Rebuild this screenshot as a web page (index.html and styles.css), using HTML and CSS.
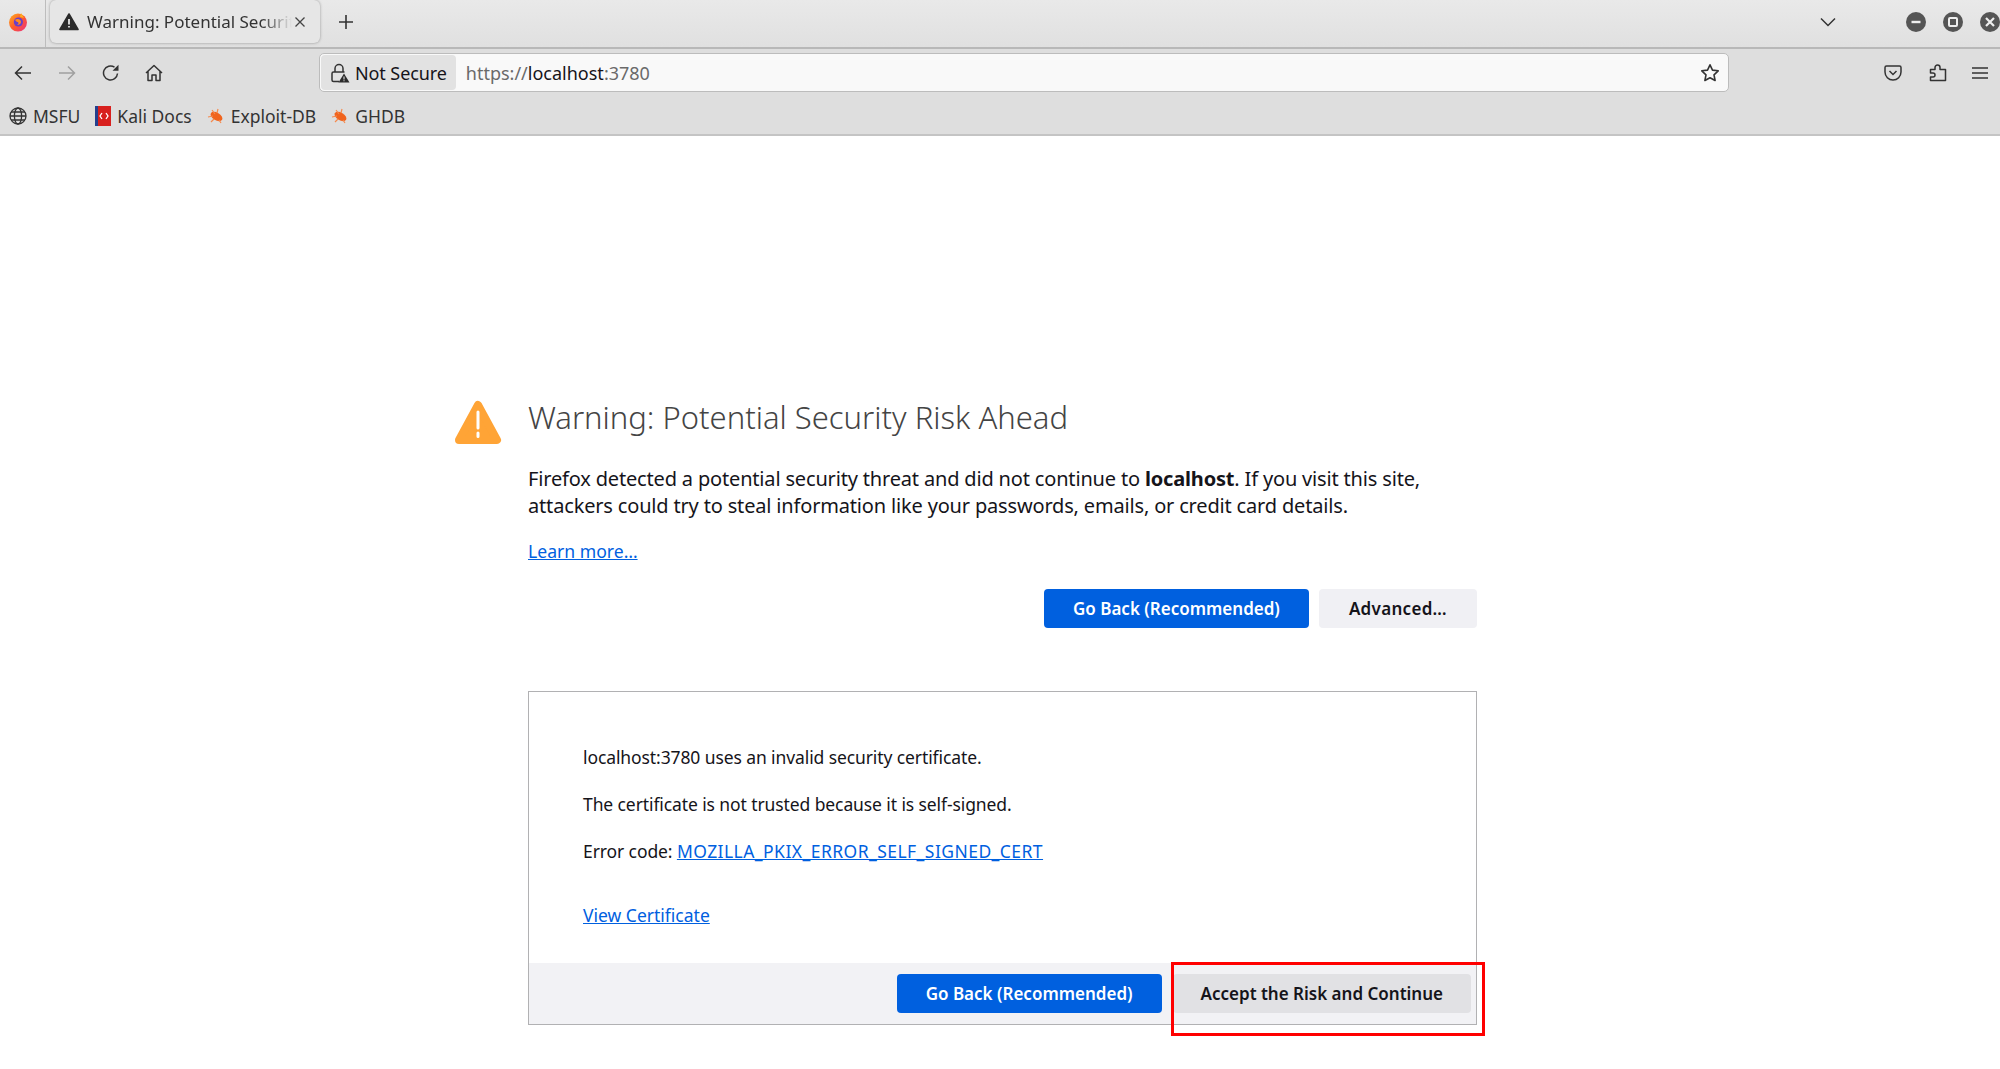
FILE: index.html
```html
<!DOCTYPE html>
<html lang="en">
<head>
  <meta charset="UTF-8" />
  <title>Warning: Potential Security Risk Ahead</title>
  <link rel="stylesheet" href="styles.css">
</head>
<body>
  <div class="tabbar">
    <svg class="fx-logo" viewBox="0 0 20 20" width="20" height="20">
      <defs>
        <linearGradient id="fxg" x1="0" y1="0" x2="1" y2="1">
          <stop offset="0" stop-color="#ffb020"/><stop offset="0.5" stop-color="#ff5a2a"/><stop offset="1" stop-color="#e8308a"/>
        </linearGradient>
      </defs>
      <circle cx="10" cy="10.6" r="9" fill="url(#fxg)"/>
      <path d="M13 1l3 5-4-1z" fill="#ffb020"/>
      <circle cx="10.4" cy="10" r="4.6" fill="#6a3fc8"/>
      <path d="M7 8c2-2 6-1 6 2 0 2-2 3-4 3 2-1 2-3 0-3z" fill="#ff8a20"/>
    </svg>
    <div class="tab-sep"></div>
    <div class="tab">
      <svg class="tab-warn" viewBox="0 0 20 18" width="20" height="18">
        <path d="M10 1L19 16.5H1z" fill="#2b2b2b" stroke="#2b2b2b" stroke-width="1.6" stroke-linejoin="round"/>
        <path d="M10 6v5.5M10 13v1.6" stroke="#e4e4e4" stroke-width="1.8"/>
      </svg>
      <span class="tab-title">Warning: Potential Security Risk Ahead</span>
      <svg class="tab-close" viewBox="0 0 12 12" width="12" height="12"><path d="M1.5 1.5l9 9M10.5 1.5l-9 9" stroke="#444" stroke-width="1.3"/></svg>
    </div>
    <svg class="new-tab" viewBox="0 0 14 14" width="14" height="14"><path d="M7 0v14M0 7h14" stroke="#333" stroke-width="1.6"/></svg>
    <div class="spacer"></div>
    <svg class="tab-list" viewBox="0 0 16 10" width="16" height="10"><path d="M1 1.5l7 7 7-7" fill="none" stroke="#333" stroke-width="1.5"/></svg>
    <div class="win-btns">
      <span class="win-btn"><svg viewBox="0 0 20 20" width="20" height="20"><path d="M5.5 10h9" stroke="#eee" stroke-width="2.4"/></svg></span>
      <span class="win-btn"><svg viewBox="0 0 20 20" width="20" height="20"><rect x="6" y="6" width="8" height="8" rx="1" fill="none" stroke="#eee" stroke-width="2"/></svg></span>
      <span class="win-btn"><svg viewBox="0 0 20 20" width="20" height="20"><path d="M6 6l8 8M14 6l-8 8" stroke="#eee" stroke-width="2.2"/></svg></span>
    </div>
  </div>

  <div class="navbar">
    <svg class="nav-icon back" viewBox="0 0 18 16" width="18" height="16"><path d="M17 8H2M8 1.5L1.5 8 8 14.5" fill="none" stroke="#333" stroke-width="1.5"/></svg>
    <svg class="nav-icon forward" viewBox="0 0 18 16" width="18" height="16"><path d="M1 8h15M10 1.5L16.5 8 10 14.5" fill="none" stroke="#a0a0a0" stroke-width="1.5"/></svg>
    <svg class="nav-icon reload" viewBox="0 0 18 18" width="18" height="18"><path d="M15.5 9.5A7 7 0 1 1 12.5 3.2" fill="none" stroke="#333" stroke-width="1.5"/><path d="M16.5 0.8v6h-6z" fill="#333"/></svg>
    <svg class="nav-icon home" viewBox="0 0 18 18" width="18" height="18"><path d="M1 9L9 1.5 17 9M3 7.5V16.5H7V11h4v5.5h4V7.5" fill="none" stroke="#333" stroke-width="1.5" stroke-linejoin="round"/></svg>
    <div class="urlbar">
      <div class="not-secure">
        <svg viewBox="0 0 20 20" width="20" height="20">
          <path d="M5 9V5.5a4 4 0 0 1 8 0V9" fill="none" stroke="#333" stroke-width="1.5"/>
          <path d="M9 18.5H3.5a1.5 1.5 0 0 1-1.5-1.5v-6.5a1.5 1.5 0 0 1 1.5-1.5h11" fill="none" stroke="#333" stroke-width="1.5"/>
          <path d="M14 10.5l5.5 9h-11z" fill="#2b2b2b"/>
          <path d="M14 13.5v3M14 17.3v1" stroke="#ddd" stroke-width="1.1"/>
        </svg>
        <span>Not Secure</span>
      </div>
      <div class="url"><span class="dim">https://</span>localhost<span class="dim">:3780</span></div>
      <svg class="star" viewBox="0 0 20 20" width="20" height="20"><path d="M10 1.8l2.5 5.3 5.7.7-4.2 4 1.1 5.7L10 14.7l-5.1 2.8L6 11.8l-4.2-4 5.7-.7z" fill="none" stroke="#333" stroke-width="1.6" stroke-linejoin="round"/></svg>
    </div>
    <svg class="tool pocket" viewBox="0 0 18 16" width="18" height="16"><path d="M1 2.5a1.5 1.5 0 0 1 1.5-1.5h13a1.5 1.5 0 0 1 1.5 1.5V7a8 8 0 0 1-16 0z" fill="none" stroke="#333" stroke-width="1.5"/><path d="M5.5 6L9 9.5 12.5 6" fill="none" stroke="#333" stroke-width="1.5"/></svg>
    <svg class="tool ext" viewBox="0 0 18 18" width="18" height="18"><path d="M1.5 5.5H6V3.5a2.5 2.5 0 0 1 5 0V5.5h5.5V16.5H1.5V13H4a2 2 0 0 0 0-4H1.5z" fill="none" stroke="#333" stroke-width="1.5" stroke-linejoin="round"/></svg>
    <svg class="tool menu" viewBox="0 0 16 14" width="16" height="14"><path d="M0 2h16M0 7h16M0 12h16" stroke="#333" stroke-width="1.5"/></svg>
  </div>

  <div class="bookmarks">
    <div class="bookmark">
      <svg viewBox="0 0 18 18" width="18" height="18"><g fill="none" stroke="#333" stroke-width="1.3"><circle cx="9" cy="9" r="8"/><ellipse cx="9" cy="9" rx="3.6" ry="8"/><path d="M1 9h16M2 5h14M2 13h14"/></g></svg>
      <span>MSFU</span>
    </div>
    <div class="bookmark">
      <svg class="kali" viewBox="0 0 16 20" width="16" height="20"><rect width="16" height="20" fill="#d8201e"/><rect width="3" height="20" fill="#24408e"/><path d="M7 7l-2 3 2 3M11 7l2 3-2 3" fill="none" stroke="#fff" stroke-width="1.3"/></svg>
      <span>Kali Docs</span>
    </div>
    <div class="bookmark">
      <svg class="bug" viewBox="0 0 18 16" width="18" height="16"><ellipse cx="9.5" cy="8.5" rx="6.5" ry="3.8" transform="rotate(30 9.5 8.5)" fill="#f0641e"/><path d="M1 9l5-1M5 2l3 4M11 1l-1 4M4 14l3-3M14 15l-2-3" stroke="#f58a4e" stroke-width="1.2"/></svg>
      <span>Exploit-DB</span>
    </div>
    <div class="bookmark">
      <svg class="bug" viewBox="0 0 18 16" width="18" height="16"><ellipse cx="9.5" cy="8.5" rx="6.5" ry="3.8" transform="rotate(30 9.5 8.5)" fill="#f0641e"/><path d="M1 9l5-1M5 2l3 4M11 1l-1 4M4 14l3-3M14 15l-2-3" stroke="#f58a4e" stroke-width="1.2"/></svg>
      <span>GHDB</span>
    </div>
  </div>

  <main class="page">
    <div class="error-wrap">
      <svg class="warn-big" viewBox="0 0 48 46" width="48" height="46">
        <path d="M24 6L43 41H5z" fill="#ffa436" stroke="#ffa436" stroke-width="8" stroke-linejoin="round"/>
        <path d="M24 13v16M24 34v3.5" stroke="#fff" stroke-width="3" stroke-linecap="round"/>
      </svg>
      <div class="error-body">
        <h1>Warning: Potential Security Risk Ahead</h1>
        <p class="intro">Firefox detected a potential security threat and did not continue to <strong>localhost</strong>. If you visit this site,<br>attackers could try to steal information like your passwords, emails, or credit card details.</p>
        <a class="learn" href="#">Learn more…</a>
        <div class="actions">
          <button class="btn primary">Go Back (Recommended)</button>
          <button class="btn plain advanced-btn">Advanced…</button>
        </div>
        <div class="advanced">
          <div class="advanced-text">
            <p>localhost:3780 uses an invalid security certificate.</p>
            <p>The certificate is not trusted because it is self-signed.</p>
            <p>Error code: <a class="code" href="#">MOZILLA_PKIX_ERROR_SELF_SIGNED_CERT</a></p>
            <a class="view-cert" href="#">View Certificate</a>
          </div>
          <div class="advanced-foot">
            <button class="btn primary">Go Back (Recommended)</button>
            <button class="btn plain accept">Accept the Risk and Continue</button>
          </div>
        </div>
      </div>
    </div>
    <div class="highlight"></div>
  </main>
</body>
</html>
```

FILE: styles.css
```css
* {
  box-sizing: border-box;
}
html, body {
  margin: 0;
  height: 100%;
  overflow: hidden;
}
body {
  font-family: "Noto Sans", sans-serif;
  background: #fff;
  color: #15141a;
}
svg {
  flex: none;
  display: block;
}
.spacer {
  flex: 1;
}

/* tab strip */
.tabbar {
  height: 49px;
  padding-bottom: 4px;
  display: flex;
  align-items: center;
  background: linear-gradient(#e9e9e9, #e0e0e0);
  border-bottom: 2px solid #b8b8b8;
  font-size: 17px;
  color: #333;
}
.fx-logo {
  margin-left: 8px;
}
.tab-sep {
  width: 1px;
  height: 47px;
  margin-top: 4px;
  margin-left: 17px;
  background: #bdbdbd;
}
.tab {
  width: 270px;
  height: 43px;
  margin-left: 4px;
  padding: 0 14px 0 9px;
  display: flex;
  align-items: center;
  background: #e6e6e6;
  border-radius: 6px;
  box-shadow: 0 0 3px rgba(0,0,0,0.35);
}
.tab-warn {
  margin-right: 8px;
}
.tab-title {
  flex: 1;
  overflow: hidden;
  white-space: nowrap;
  -webkit-mask-image: linear-gradient(to right, #000 85%, transparent);
  mask-image: linear-gradient(to right, #000 85%, transparent);
}
.tab-close {
  margin-left: 2px;
}
.new-tab {
  margin-left: 19px;
}
.tab-list {
  margin-right: 69px;
}
.win-btns {
  display: flex;
  gap: 17px;
  margin-left: 1px;
}
.win-btn {
  width: 20px;
  height: 20px;
  border-radius: 50%;
  background: #555;
}

/* nav toolbar */
.navbar {
  height: 46px;
  padding-top: 1px;
  display: flex;
  align-items: center;
  background: #dedede;
}
.nav-icon.back {
  margin-left: 14px;
}
.nav-icon.forward {
  margin-left: 26px;
}
.nav-icon.reload {
  margin-left: 26px;
}
.nav-icon.home {
  margin-left: 25px;
}
.urlbar {
  width: 1410px;
  height: 39px;
  margin-left: 156px;
  padding: 1px 8px 1px 1px;
  display: flex;
  align-items: center;
  background: #f9f9f9;
  border: 1px solid #bcbcbc;
  border-radius: 5px;
  font-size: 18px;
}
.not-secure {
  height: 100%;
  padding: 0 9px;
  display: flex;
  align-items: center;
  gap: 5px;
  background: #e2e2e2;
  border-radius: 4px;
  letter-spacing: -0.1px;
}
.url {
  flex: 1;
  margin-left: 10px;
}
.dim {
  color: #6a6a6a;
}
.tool.pocket {
  margin-left: 155px;
}
.tool.ext {
  margin-left: 27px;
}
.tool.menu {
  margin-left: 25px;
}

/* bookmarks toolbar */
.bookmarks {
  height: 41px;
  padding: 3px 0 0 9px;
  display: flex;
  align-items: center;
  gap: 15px;
  background: #dedede;
  border-bottom: 2px solid #c4c4c4;
  font-size: 17.5px;
  color: #333;
}
.bookmark {
  display: flex;
  align-items: center;
  gap: 6px;
}

/* error page */
.page {
  height: 933px;
  position: relative;
}
.error-wrap {
  width: 1030px;
  margin-left: 454px;
  padding-top: 258px;
  display: flex;
  align-items: flex-start;
}
.warn-big {
  margin-top: 5px;
}
.error-body {
  width: 949px;
  margin-left: 26px;
  font-size: 20px;
}
h1 {
  margin: 0;
  font-size: 31px;
  line-height: 46px;
  font-weight: 300;
  color: #444;
}
.intro {
  margin: 25px 0 0;
  line-height: 27px;
  white-space: nowrap;
  letter-spacing: -0.17px;
}
a {
  color: #0060df;
}
.learn {
  display: block;
  margin-top: 19px;
  font-size: 17.6px;
  line-height: 27px;
}
.actions {
  margin-top: 24px;
  display: flex;
  justify-content: flex-end;
  gap: 10px;
}
.btn {
  height: 39px;
  padding: 0 29px;
  border: none;
  border-radius: 4px;
  font-family: inherit;
  font-size: 17px;
  font-weight: 600;
}
.primary {
  background: #0060df;
  color: #fff;
}
.plain {
  background: #f0f0f4;
  color: #15141a;
}
.advanced-btn {
  padding: 0 30px;
  letter-spacing: 0.3px;
}
.advanced {
  height: 334px;
  margin-top: 63px;
  display: flex;
  flex-direction: column;
  border: 1px solid #b1b1b3;
  font-size: 17.5px;
}
.advanced-text {
  flex: 1;
  padding: 53px 54px 0;
}
.advanced-text p {
  margin: 0 0 22px;
  line-height: 25px;
  letter-spacing: -0.1px;
}
.code {
  letter-spacing: 0.45px;
}
.view-cert {
  display: block;
  margin-top: 39px;
  line-height: 25px;
}
.advanced-foot {
  height: 61px;
  padding-right: 5px;
  display: flex;
  align-items: center;
  justify-content: flex-end;
  gap: 13px;
  background: #f2f2f5;
}
.advanced-foot .primary {
  margin-right: -2px;
}
.accept {
  padding: 0 28px;
  background: #e1e1e4;
}
.highlight {
  position: absolute;
  left: 1171px;
  top: 826px;
  width: 314px;
  height: 74px;
  border: 3px solid #f00;
}
```
